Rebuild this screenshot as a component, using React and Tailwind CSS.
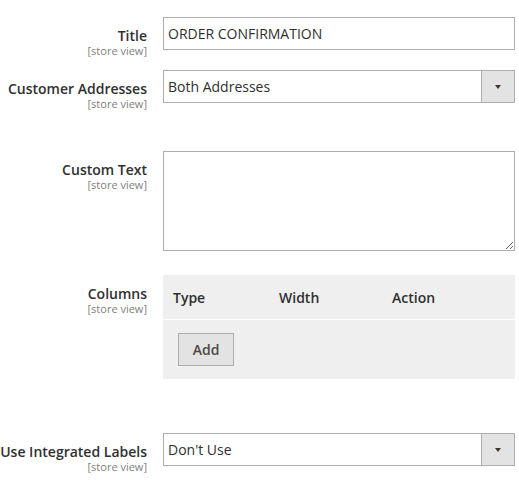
import React from 'react';

const Label = ({ text }) => (
    <div className="w-[147px] shrink-0 text-right pt-[10px]">
        <div className="text-[14px] leading-[17px] font-semibold text-[#303030] whitespace-nowrap">{text}</div>
        <div className="text-[11px] leading-[13px] text-[#808080]">[store view]</div>
    </div>
);

const Select = ({ value }) => (
    <div className="flex h-[33px] border border-[#adadad] bg-white">
        <div className="flex-1 pl-[4px] text-[14px] leading-[31px] text-[#303030]">{value}</div>
        <div className="w-[33px] flex items-center justify-center bg-[#e3e3e3] border-l border-[#adadad]">
            <div className="w-0 h-0 border-l-[3.5px] border-r-[3.5px] border-t-[4px] border-l-transparent border-r-transparent border-t-[#41362f]" />
        </div>
    </div>
);

export default function App() {
    return (
        <div className="w-[519px] h-[491px] bg-white font-['Open_Sans',sans-serif] text-[#303030] pr-[4px] overflow-hidden">
            {/* Title */}
            <div className="flex gap-[16px] mt-[17px] h-[33px]">
                <Label text="Title" />
                <div className="flex-1">
                    <div className="h-[33px] border border-[#adadad] pl-[4px] text-[14px] leading-[31px]">ORDER CONFIRMATION</div>
                </div>
            </div>

            {/* Customer Addresses */}
            <div className="flex gap-[16px] mt-[20px] h-[33px]">
                <Label text="Customer Addresses" />
                <div className="flex-1">
                    <Select value="Both Addresses" />
                </div>
            </div>

            {/* Custom Text */}
            <div className="flex gap-[16px] mt-[48px] h-[100px]">
                <Label text="Custom Text" />
                <div className="flex-1">
                    <textarea className="block w-full h-[100px] border border-[#adadad] outline-none" defaultValue="" />
                </div>
            </div>

            {/* Columns */}
            <div className="flex gap-[16px] mt-[24px] h-[104px]">
                <Label text="Columns" />
                <div className="flex-1 bg-[#efefef]">
                    <div className="flex h-[45px] items-center pl-[10px] border-b border-white text-[14px] font-semibold text-[#303030]">
                        <div className="w-[106px]">Type</div>
                        <div className="w-[113px]">Width</div>
                        <div>Action</div>
                    </div>
                    <div className="pt-[13px] pl-[15px]">
                        <button className="w-[56px] h-[33px] bg-[#e3e3e3] border border-[#adadad] text-[14px] font-semibold text-[#514943]">
                            Add
                        </button>
                    </div>
                </div>
            </div>

            {/* Use Integrated Labels */}
            <div className="flex gap-[16px] mt-[54px] h-[33px]">
                <Label text="Use Integrated Labels" />
                <div className="flex-1">
                    <Select value="Don't Use" />
                </div>
            </div>
        </div>
    );
}
